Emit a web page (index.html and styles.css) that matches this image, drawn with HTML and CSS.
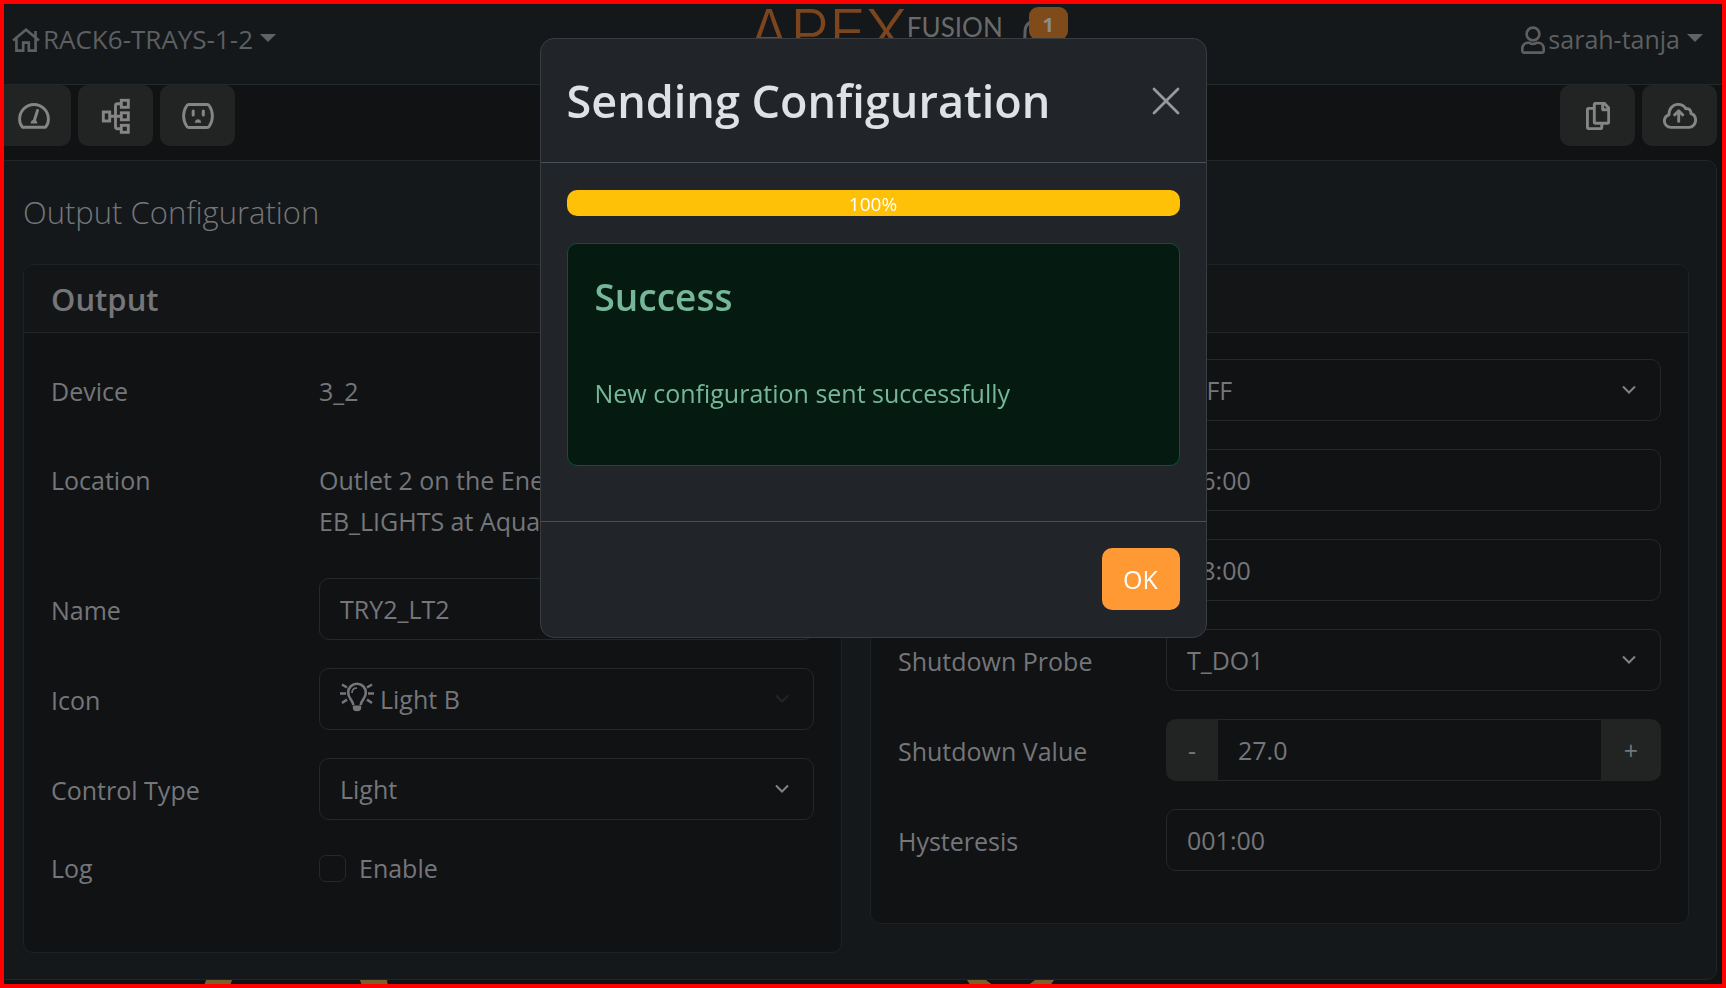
FILE: index.html
```html
<!DOCTYPE html>
<html lang="en">
<head>
<meta charset="utf-8">
<meta name="viewport" content="width=device-width, initial-scale=1">
<title>Output Configuration</title>
<link rel="stylesheet" href="styles.css">
</head>
<body>
<div class="page">
  <header class="topbar">
    <button class="nav-drop nav-system" type="button">
      <svg class="icon-home" viewBox="0 0 28 24" fill="none" stroke="currentColor" stroke-width="2.6" aria-hidden="true"><path d="M1 12.5 14 1.8l13 10.7M4.4 10v12.6h6.8v-8h5.6v8h6.8V10M23.500 9V3"/></svg>
      <span>RACK6-TRAYS-1-2</span>
      <span class="caret"></span>
    </button>
    <div class="brand">
      <span class="brand-main">APEX</span>
      <span class="brand-sub">FUSION</span>
      <button class="bell" type="button" aria-label="Notifications">
        <svg viewBox="0 0 34 38" fill="none" stroke="currentColor" stroke-width="3" aria-hidden="true"><path d="M3 29c3-4 3-7 3-13C6 9 10 5 17 5s11 4 11 11c0 6 0 9 3 13zM13 33c1 3 7 3 8 0"/></svg>
        <span class="badge">1</span>
      </button>
    </div>
    <button class="nav-drop nav-user" type="button">
      <svg class="icon-user" viewBox="0 0 24 28" fill="none" stroke="currentColor" stroke-width="2.6" aria-hidden="true"><circle cx="12" cy="8" r="6.400"/><path d="M7 16.800h1.500c2 1.200 5 1.200 7 0H17c3.300 0 5.700 2.400 5.700 5.700v2.300c0 1-.8 1.800-1.800 1.800H3.100c-1 0-1.800-.8-1.800-1.800v-2.300c0-3.300 2.400-5.700 5.700-5.700z"/></svg>
      <span>sarah-tanja</span>
      <span class="caret"></span>
    </button>
  </header>

  <main class="content">
    <nav class="toolbar">
      <button class="tool" type="button" aria-label="Dashboard">
        <svg width="32" height="26" viewBox="0 0 32 26" fill="none" stroke="currentColor" stroke-width="2.900" aria-hidden="true"><path d="M4.500 24.200C2.500 22 1.600 19.500 1.600 16.200 1.600 8 8 1.500 16 1.500S30.400 8 30.400 16.200c0 3.300-.9 5.800-2.900 8z" stroke-linejoin="round"/><path d="M16.500 17 19.500 7.500" stroke-linecap="round"/><path d="M12.600 20.500c0-2.200 1.500-3.700 3.400-3.700s3.400 1.500 3.400 3.700z" fill="currentColor" stroke="none"/></svg>
      </button>
      <button class="tool" type="button" aria-label="Module tree">
        <svg width="30" height="36" viewBox="0 0 30 36" fill="none" stroke="currentColor" stroke-width="2.900" aria-hidden="true"><rect x="2.300" y="14" width="6.400" height="9"/><rect x="20.300" y="2.300" width="7" height="7"/><rect x="20.300" y="14.800" width="7" height="7"/><rect x="20.300" y="27.300" width="7" height="7"/><path d="M8.700 18.300h11.600M20 5.800h-3.500q-2 0-2 2v21q0 2 2 2H20"/></svg>
      </button>
      <button class="tool" type="button" aria-label="Outlets">
        <svg width="32" height="26" viewBox="0 0 32 26" fill="none" stroke="currentColor" stroke-width="2.900" aria-hidden="true"><path d="M7 1.500h18q1.500 0 2.300 1.300Q30.400 7.500 30.400 13t-3.100 10.200Q26.500 24.500 25 24.500H7q-1.500 0-2.300-1.300Q1.600 18.500 1.600 13T4.700 2.800Q5.500 1.500 7 1.500z"/><path d="M11.200 8v4M21.300 8v4" stroke-width="3" stroke-linecap="round"/><path d="M12.800 19.800c0-2 1.300-3.600 3.200-3.600s3.200 1.600 3.200 3.600z" fill="currentColor" stroke="none"/></svg>
      </button>
      <span class="spacer"></span>
      <button class="tool" type="button" aria-label="Copy">
        <svg width="24" height="28" viewBox="0 0 24 28" fill="none" stroke="currentColor" stroke-width="2.900" stroke-linejoin="round" aria-hidden="true"><path d="M9.500 1.400h9L22.700 6v14q0 1.200-1.200 1.200h-12q-1.200 0-1.200-1.200V2.600q0-1.200 1.200-1.200z"/><path d="M16.700 1.800v6h5.800"/><path d="M8 6.400H2.600Q1.400 6.400 1.400 7.600v17.800q0 1.200 1.200 1.200h12q1.200 0 1.200-1.200v-4"/></svg>
      </button>
      <button class="tool" type="button" aria-label="Upload">
        <svg width="34" height="26" viewBox="0 0 34 26" fill="none" stroke="currentColor" stroke-width="2.900" stroke-linejoin="round" aria-hidden="true"><path d="M8 24.400c-3.700 0-6.600-2.900-6.600-6.500 0-2.900 1.900-5.300 4.600-6.100C5.800 5.500 10 1.400 15 1.400c3.400 0 6.300 1.700 7.800 4.400 2.900-.8 5.500 1.400 5.100 4.700 2.700.8 4.700 3.500 4.700 6.700 0 4-3 7.200-6.700 7.200z"/><path d="M15.700 19.500V8.500M10.800 12.800l4.900-4.900 4.900 4.900"/></svg>
      </button>
    </nav>

    <section class="panel">
      <h1 class="panel-title">Output Configuration</h1>
      <div class="cards">
        <section class="card">
          <h2 class="card-head">Output</h2>
          <div class="card-body">
            <div class="row"><span class="label">Device</span><span class="static">3_2</span></div>
            <div class="row"><span class="label">Location</span><span class="static">Outlet 2 on the EnergyBar<br>EB_LIGHTS at AquaBus</span></div>
            <div class="row"><label class="label" for="name">Name</label><input class="field" id="name" type="text" value="TRY2_LT2"></div>
            <div class="row"><label class="label" for="icon">Icon</label>
              <div class="picker picker-muted">
                <select class="field field-icon" id="icon"><option>Light B</option></select>
                <svg class="bulb" width="34" height="30" viewBox="0 0 34 30" fill="none" stroke="currentColor" stroke-width="2.600" aria-hidden="true"><path d="M13.300 23c0-4.500-5.100-6.500-5.100-12.300 0-5.300 3.900-9 8.800-9s8.800 3.700 8.800 9c0 5.800-5.100 7.800-5.100 12.300"/><path d="M12 11c0-3 1.800-5 5-5" stroke-width="1.600"/><path d="M12.800 23.500h8.400v2.300q0 3.500-4.200 3.500t-4.200-3.500z" fill="currentColor" stroke="none"/><path d="M0 11.500h6M28 11.500h6M2 2.500l5 3M32 2.500l-5 3M2 21l5-3.300M32 21l-5-3.300"/></svg>
                <svg class="chevron" width="16" height="10" viewBox="0 0 16 10" aria-hidden="true"><path d="M2 1.500l6 6 6-6"/></svg>
              </div>
            </div>
            <div class="row"><label class="label" for="ctype">Control Type</label>
              <div class="picker">
                <select class="field" id="ctype"><option>Light</option></select>
                <svg class="chevron" width="16" height="10" viewBox="0 0 16 10" aria-hidden="true"><path d="M2 1.500l6 6 6-6"/></svg>
              </div>
            </div>
            <div class="row row-check"><span class="label">Log</span>
              <label class="check"><input type="checkbox"><span>Enable</span></label>
            </div>
          </div>
        </section>

        <section class="card">
          <h2 class="card-head">Configuration</h2>
          <div class="card-body">
            <div class="row"><label class="label" for="fallback">Fallback</label>
              <div class="picker">
                <select class="field" id="fallback"><option>OFF</option></select>
                <svg class="chevron" width="16" height="10" viewBox="0 0 16 10" aria-hidden="true"><path d="M2 1.500l6 6 6-6"/></svg>
              </div>
            </div>
            <div class="row"><label class="label" for="on">On Time</label><input class="field" id="on" type="text" value="06:00"></div>
            <div class="row"><label class="label" for="off">Off Time</label><input class="field" id="off" type="text" value="18:00"></div>
            <div class="row"><label class="label" for="probe">Shutdown Probe</label>
              <div class="picker">
                <select class="field" id="probe"><option>T_DO1</option></select>
                <svg class="chevron" width="16" height="10" viewBox="0 0 16 10" aria-hidden="true"><path d="M2 1.500l6 6 6-6"/></svg>
              </div>
            </div>
            <div class="row"><label class="label" for="value">Shutdown Value</label>
              <div class="stepper">
                <button class="step step-down" type="button">-</button>
                <input class="field" id="value" type="text" value="27.0">
                <button class="step step-up" type="button">+</button>
              </div>
            </div>
            <div class="row"><label class="label" for="hyst">Hysteresis</label><input class="field" id="hyst" type="text" value="001:00"></div>
          </div>
        </section>
      </div>
    </section>
    <svg class="watermark" width="860" height="6" viewBox="0 0 860 6" fill="#7e5f2c" aria-hidden="true"><path d="M2 0H28L26 6H0zM156 0h27l1 6h-26zM763 0h19l8 6h-23zM831 0h19l-4 6h-23z"/></svg>
  </main>
</div>

<div class="overlay">
  <div class="modal" role="dialog" aria-modal="true" aria-labelledby="modal-title">
    <div class="modal-head">
      <h2 class="modal-title" id="modal-title">Sending Configuration</h2>
      <button class="close" type="button" aria-label="Close">
        <svg width="28" height="28" viewBox="0 0 28 28" fill="none" stroke="currentColor" stroke-width="2.800" stroke-linecap="round" aria-hidden="true"><path d="M2 2l24 24M26 2 2 26"/></svg>
      </button>
    </div>
    <div class="modal-body">
      <div class="progress" role="progressbar" aria-valuenow="100" aria-valuemin="0" aria-valuemax="100" aria-label="Progress"><div class="progress-bar" style="width:100%">100%</div></div>
      <div class="alert" role="alert">
        <h3 class="alert-title">Success</h3>
        <p class="alert-text">New configuration sent successfully</p>
      </div>
    </div>
    <div class="modal-foot"><button class="ok" type="button">OK</button></div>
  </div>
</div>
</body>
</html>
```
FILE: styles.css
```css
* { box-sizing: border-box; }

html, body { height: 100%; }

body {
  margin: 0;
  border: 4px solid #ff0000;
  background: #111214;
  color: #74767a;
  font: 25px/41px "Open Sans", "Noto Sans", sans-serif;
  overflow: hidden;
}

button, input, select { font: inherit; color: inherit; margin: 0; }
button { border: 0; padding: 0; cursor: pointer; }
h1, h2, h3, p { margin: 0; }

.page { height: 100%; overflow: hidden; }

/* Top bar */
.topbar {
  display: grid;
  grid-template-columns: 1fr auto 1fr;
  height: 81px;
  padding: 0 19px 0 8px;
  background: #14181a;
  border-bottom: 1px solid #23282b;
}
.nav-drop {
  display: flex;
  align-items: center;
  justify-self: start;
  align-self: start;
  gap: 3px;
  padding-top: 15px;
  background: none;
  color: #5d5f61;
}
.nav-system { font-size: 26px; }
.nav-user { justify-self: end; }
.icon-home { width: 28px; height: 24px; }
.icon-user { width: 24px; height: 28px; }
.caret {
  margin-left: 4px;
  margin-bottom: 4px;
  border: 8px solid transparent;
  border-top-color: #606264;
  border-bottom: 0;
}
.brand { display: flex; align-items: flex-start; padding-left: 86px; }
.brand-main { font: 300 62px/56px Inter, sans-serif; color: #7d451d; }
.brand-sub { padding-top: 7px; font: 26px/32px Lato, sans-serif; color: #6a6a6a; }
.bell {
  position: relative;
  display: flex;
  margin: 12px 0 0 16px;
  background: none;
  color: #5d5f61;
}
.bell svg { width: 34px; height: 38px; }
.badge {
  position: absolute;
  left: 10px;
  top: -9px;
  width: 39px;
  height: 33px;
  border-radius: 9px;
  background: #7f4b1a;
  color: #8b8b8b;
  font-weight: 700;
  font-size: 20px;
  line-height: 35px;
}

/* Toolbar */
.content { margin-left: -8px; padding-right: 5px; }
.toolbar { display: flex; gap: 7px; height: 75px; }
.tool {
  display: grid;
  place-items: center;
  width: 75px;
  height: 61px;
  border-radius: 10px;
  background: #222423;
  color: #858585;
}
.spacer { flex: 1; }

/* Panel and cards */
.panel {
  padding: 25px 27px 26px 26px;
  background: #14181a;
  border: 1px solid #222527;
  border-radius: 10px;
}
.panel-title {
  margin-bottom: 25px;
  font-size: 31px;
  font-weight: 300;
  line-height: 53px;
}
.cards { display: grid; grid-template-columns: 1fr 1fr; gap: 28px; align-items: start; }
.card { border: 1px solid #1f2224; border-radius: 10px; background: #111214; overflow: hidden; }
.card-head {
  padding: 14px 27px 12px;
  border-bottom: 1px solid #232527;
  background: #141516;
  font-size: 31px;
  font-weight: 600;
}
.card-body { display: grid; gap: 28px; padding: 26px 27px 52px; }
.row { display: grid; grid-template-columns: 268px 1fr; align-items: start; }
.label, .static { padding: 12px 0 8px; }
.row-check { min-height: 52px; }
.row-check .label { padding: 0; }

.field {
  grid-area: 1 / 1;
  width: 100%;
  height: 62px;
  padding: 0 20px;
  border: 1px solid #25282a;
  border-radius: 10px;
  background: #111214;
  appearance: none;
  outline: 0;
}
.row > .field { grid-area: auto; }
.picker { display: grid; align-items: center; }
.chevron {
  grid-area: 1 / 1;
  justify-self: end;
  margin-right: 24px;
  fill: none;
  stroke: #808284;
  stroke-width: 2;
  pointer-events: none;
}
.picker-muted .chevron { stroke: #222426; }
.bulb { grid-area: 1 / 1; margin: 0 0 4px 21px; pointer-events: none; }
.field-icon { padding-left: 60px; }

.check { display: flex; align-items: center; gap: 13px; }
.check input {
  width: 27px;
  height: 27px;
  border: 1px solid #25282a;
  border-radius: 7px;
  background: #111214;
  appearance: none;
}

.stepper { display: flex; }
.stepper .field { flex: 1; min-width: 0; border-radius: 0; border-left: 0; border-right: 0; }
.step { height: 62px; background: #222423; }
.step-down { width: 52px; border-radius: 10px 0 0 10px; }
.step-up { width: 60px; border-radius: 0 10px 10px 0; }

.watermark { display: block; margin-left: 208px; }

/* Modal */
.overlay {
  position: fixed;
  inset: 0;
  display: flex;
  justify-content: center;
  align-items: flex-start;
  padding: 38px 0 0 20px;
}
.modal {
  width: 667px;
  background: #212529;
  border: 1px solid #3a3d40;
  border-radius: 14px;
  color: #dee2e6;
}
.modal-head {
  display: flex;
  align-items: center;
  justify-content: space-between;
  padding: 27px 26px;
  border-bottom: 1px solid #495057;
}
.modal-title { font-size: 45px; font-weight: 600; line-height: 69px; }
.close { display: flex; background: none; color: #97999c; }
.modal-body { padding: 27px 26px 55px; }
.progress { overflow: hidden; border-radius: 10px; background: #2b3035; }
.progress-bar {
  height: 26px;
  background: #ffc107;
  color: #fff;
  font-size: 19px;
  line-height: 28px;
  text-align: center;
}
.alert {
  margin-top: 27px;
  padding: 26px 27px 51px;
  border: 1px solid #0f5132;
  border-radius: 10px;
  background: #051b11;
  color: #75b798;
}
.alert-title { font-size: 37px; font-weight: 600; line-height: 53px; }
.alert-text { margin-top: 50px; }
.modal-foot {
  display: flex;
  justify-content: flex-end;
  padding: 26px 26px 27px;
  border-top: 1px solid #495057;
}
.ok {
  width: 78px;
  height: 62px;
  border-radius: 10px;
  background: #ff9933;
  color: #fff;
}
```
